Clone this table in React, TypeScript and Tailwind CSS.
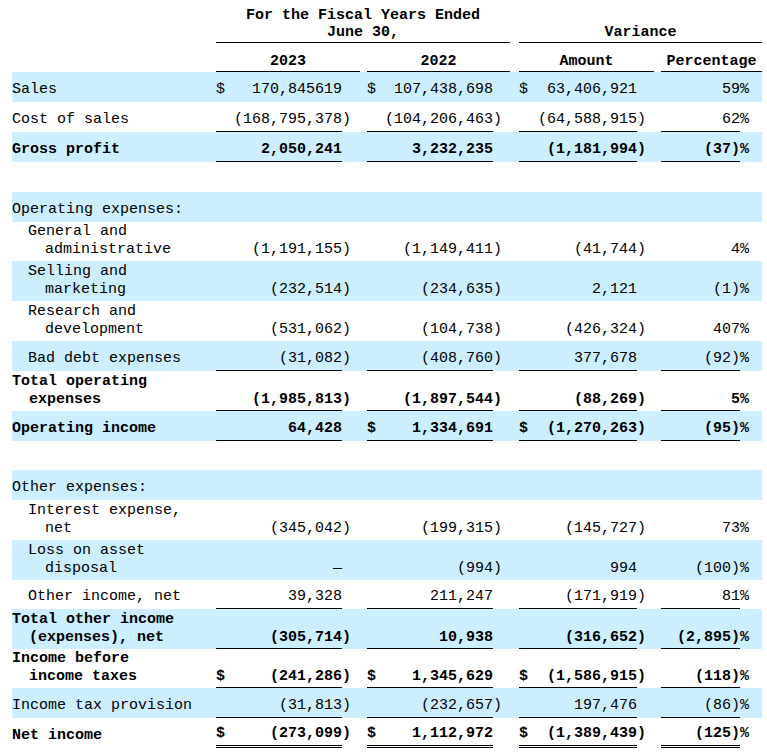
import React from "react";

type Cell = { d?: boolean; v: string };

interface Row {
  label: string[];
  indent?: boolean;
  bold?: boolean;
  blue?: boolean;
  h: string;
  line?: "single" | "double";
  vals?: [Cell, Cell, Cell, string];
}

const rows: Row[] = [
  { label: ["Sales"], blue: true, h: "h-[30px]", vals: [{ d: true, v: "170,845619" }, { d: true, v: "107,438,698" }, { d: true, v: "63,406,921" }, "59%"] },
  { label: ["Cost of sales"], h: "h-[30px]", line: "single", vals: [{ v: "(168,795,378)" }, { v: "(104,206,463)" }, { v: "(64,588,915)" }, "62%"] },
  { label: ["Gross profit"], bold: true, blue: true, h: "h-[30px]", line: "single", vals: [{ v: "2,050,241" }, { v: "3,232,235" }, { v: "(1,181,994)" }, "(37)%"] },
  { label: [""], h: "h-[30px]" },
  { label: ["Operating expenses:"], blue: true, h: "h-[30px]" },
  { label: ["General and", "administrative"], indent: true, h: "h-[39px]", vals: [{ v: "(1,191,155)" }, { v: "(1,149,411)" }, { v: "(41,744)" }, "4%"] },
  { label: ["Selling and", "marketing"], indent: true, blue: true, h: "h-[40px]", vals: [{ v: "(232,514)" }, { v: "(234,635)" }, { v: "2,121" }, "(1)%"] },
  { label: ["Research and", "development"], indent: true, h: "h-[40px]", vals: [{ v: "(531,062)" }, { v: "(104,738)" }, { v: "(426,324)" }, "407%"] },
  { label: ["Bad debt expenses"], indent: true, blue: true, h: "h-[30px]", line: "single", vals: [{ v: "(31,082)" }, { v: "(408,760)" }, { v: "377,678" }, "(92)%"] },
  { label: ["Total operating", "expenses"], bold: true, h: "h-[40px]", line: "single", vals: [{ v: "(1,985,813)" }, { v: "(1,897,544)" }, { v: "(88,269)" }, "5%"] },
  { label: ["Operating income"], bold: true, blue: true, h: "h-[30px]", line: "single", vals: [{ v: "64,428" }, { d: true, v: "1,334,691" }, { d: true, v: "(1,270,263)" }, "(95)%"] },
  { label: [""], h: "h-[29px]" },
  { label: ["Other expenses:"], blue: true, h: "h-[30px]" },
  { label: ["Interest expense,", "net"], indent: true, h: "h-[40px]", vals: [{ v: "(345,042)" }, { v: "(199,315)" }, { v: "(145,727)" }, "73%"] },
  { label: ["Loss on asset", "disposal"], indent: true, blue: true, h: "h-[40px]", vals: [{ v: "—" }, { v: "(994)" }, { v: "994" }, "(100)%"] },
  { label: ["Other income, net"], indent: true, h: "h-[29px]", line: "single", vals: [{ v: "39,328" }, { v: "211,247" }, { v: "(171,919)" }, "81%"] },
  { label: ["Total other income", "(expenses), net"], bold: true, blue: true, h: "h-[40px]", line: "single", vals: [{ v: "(305,714)" }, { v: "10,938" }, { v: "(316,652)" }, "(2,895)%"] },
  { label: ["Income before", "income taxes"], bold: true, h: "h-[39px]", line: "single", vals: [{ d: true, v: "(241,286)" }, { d: true, v: "1,345,629" }, { d: true, v: "(1,586,915)" }, "(118)%"] },
  { label: ["Income tax provision"], blue: true, h: "h-[30px]", line: "single", vals: [{ v: "(31,813)" }, { v: "(232,657)" }, { v: "197,476" }, "(86)%"] },
  { label: ["Net income"], bold: true, h: "h-[30px]", line: "double", vals: [{ d: true, v: "(273,099)" }, { d: true, v: "1,112,972" }, { d: true, v: "(1,389,439)" }, "(125)%"] },
];

const lineCls = (line?: "single" | "double") =>
  line === "double"
    ? "border-b-[3px] border-double border-black"
    : line === "single"
    ? "border-b border-black"
    : "border-b border-transparent";

const Amount = ({ c, w, line, pb }: { c: Cell; w: string; line?: "single" | "double"; pb: string }) => {
  const neg = c.v.endsWith(")");
  const main = neg ? c.v.slice(0, -1) : c.v;
  return (
    <div className={`flex h-full items-end justify-between ${w} ${pb} ${lineCls(line)}`}>
      <span>{c.d ? "$" : ""}</span>
      <span className="whitespace-nowrap">
        {main}
        <span className="inline-block w-0">{neg ? ")" : ""}</span>
      </span>
    </div>
  );
};

const Pct = ({ v, line, pb }: { v: string; line?: "single" | "double"; pb: string }) => (
  <div className={`flex h-full w-[79px] items-end justify-end ${pb} ${lineCls(line)}`}>
    <span className="whitespace-nowrap">
      {v.slice(0, -1)}
      <span className="inline-block w-0">%</span>
    </span>
  </div>
);

export default function App() {
  return (
    <div className="min-h-[753px] bg-white pl-[12px] font-['Liberation_Mono',monospace] text-[15px] leading-[18px] text-black">
      {/* header: period group + variance group */}
      <div className="flex h-[43px] font-bold">
        <div className="w-[204px]" />
        <div className="flex w-[294px] flex-col items-center justify-end border-b border-black pb-[1px] leading-[17px]">
          <span>For the Fiscal Years Ended</span>
          <span>June 30,</span>
        </div>
        <div className="ml-[9px] flex w-[243px] items-end justify-center border-b border-black pb-[1px] leading-[17px]">
          Variance
        </div>
      </div>
      <div className="flex h-[29px] font-bold">
        <div className="w-[204px]" />
        <div className="flex w-[144px] items-end justify-center border-b border-black">2023</div>
        <div className="ml-[7px] flex w-[143px] items-end justify-center border-b border-black">2022</div>
        <div className="ml-[9px] flex w-[135px] items-end justify-center border-b border-black">Amount</div>
        <div className="ml-[7px] flex w-[101px] items-end justify-center border-b border-black">Percentage</div>
      </div>

      {rows.map((r, i) => {
        const pb = r.label.length > 1 ? "pb-[1px]" : "pb-[2px]";
        return (
          <div
            key={i}
            className={`flex w-[750px] ${r.h} ${r.blue ? "bg-[#cceeff]" : "bg-white"} ${r.bold ? "font-bold" : ""}`}
          >
            <div className={`flex w-[204px] flex-col justify-end whitespace-nowrap ${pb} border-b border-transparent`}>
              {r.label.map((t, j) => (
                <div
                  key={j}
                  className={
                    r.indent ? (j === 0 ? "pl-[16px]" : "pl-[33px]") : j === 0 ? "" : "pl-[17px]"
                  }
                >
                  {t}
                </div>
              ))}
            </div>
            {r.vals && (
              <>
                <div className="w-[144px]">
                  <Amount c={r.vals[0]} w="w-[126px]" line={r.line} pb={pb} />
                </div>
                <div className="ml-[7px] w-[143px]">
                  <Amount c={r.vals[1]} w="w-[126px]" line={r.line} pb={pb} />
                </div>
                <div className="ml-[9px] w-[135px]">
                  <Amount c={r.vals[2]} w="w-[118px]" line={r.line} pb={pb} />
                </div>
                <div className="ml-[7px] w-[101px]">
                  <Pct v={r.vals[3]} line={r.line} pb={pb} />
                </div>
              </>
            )}
          </div>
        );
      })}
    </div>
  );
}
